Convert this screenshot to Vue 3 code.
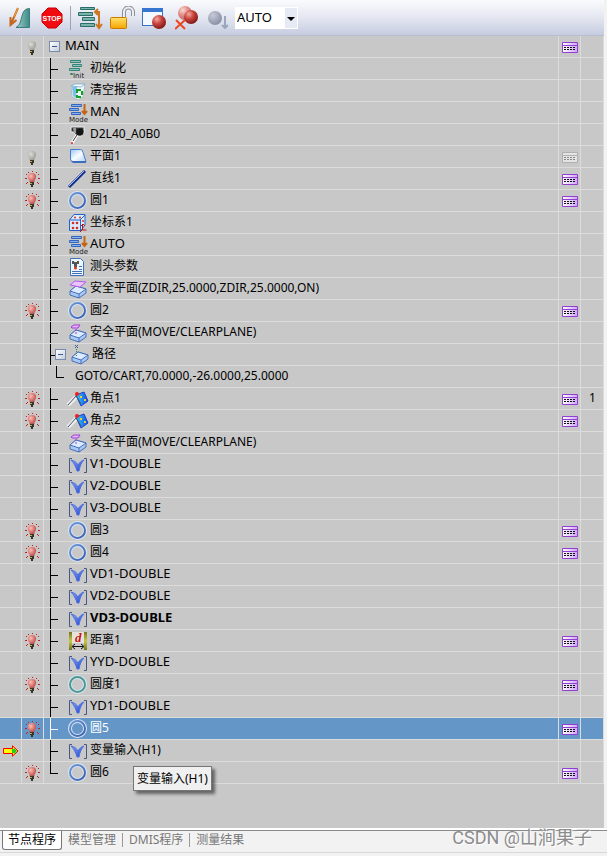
<script setup>
import { ref } from "vue";

const mode = ref("AUTO");
const selected = ref(31);

const rows = [
  { text: "MAIN", kind: "root", wide: true, bulb: "off", report: "on" },
  { text: "初始化", icon: "init" },
  { text: "清空报告", icon: "recycle" },
  { text: "MAN", icon: "mode", wide: true },
  { text: "D2L40_A0B0", icon: "probe" },
  { text: "平面1", icon: "plane", bulb: "off", report: "off" },
  { text: "直线1", icon: "line", bulb: "on", report: "on" },
  { text: "圆1", icon: "circle", bulb: "on", report: "on" },
  { text: "坐标系1", icon: "coord" },
  { text: "AUTO", icon: "mode", wide: true },
  { text: "测头参数", icon: "params" },
  { text: "安全平面(ZDIR,25.0000,ZDIR,25.0000,ON)", icon: "clear" },
  { text: "圆2", icon: "circle", bulb: "on", report: "on" },
  { text: "安全平面(MOVE/CLEARPLANE)", icon: "move" },
  { text: "路径", kind: "branch", icon: "path" },
  { text: "GOTO/CART,70.0000,-26.0000,25.0000", kind: "leaf" },
  { text: "角点1", icon: "corner", bulb: "on", report: "on", count: "1" },
  { text: "角点2", icon: "corner", bulb: "on", report: "on" },
  { text: "安全平面(MOVE/CLEARPLANE)", icon: "move" },
  { text: "V1-DOUBLE", icon: "variable", wide: true },
  { text: "V2-DOUBLE", icon: "variable", wide: true },
  { text: "V3-DOUBLE", icon: "variable", wide: true },
  { text: "圆3", icon: "circle", bulb: "on", report: "on" },
  { text: "圆4", icon: "circle", bulb: "on", report: "on" },
  { text: "VD1-DOUBLE", icon: "variable", wide: true },
  { text: "VD2-DOUBLE", icon: "variable", wide: true },
  { text: "VD3-DOUBLE", icon: "variable", wide: true, bold: true },
  { text: "距离1", icon: "distance", bulb: "on", report: "on" },
  { text: "YYD-DOUBLE", icon: "variable", wide: true },
  { text: "圆度1", icon: "roundness", bulb: "on", report: "on" },
  { text: "YD1-DOUBLE", icon: "variable", wide: true },
  { text: "圆5", icon: "circle", bulb: "on", report: "on" },
  { text: "变量输入(H1)", icon: "variable", current: true, tip: "变量输入(H1)" },
  { text: "圆6", icon: "circle", kind: "last", bulb: "on", report: "on" },
];

const tabs = ["节点程序", "模型管理", "DMIS程序", "测量结果"];
const activeTab = ref("节点程序");
</script>

<template>
  <div class="window">
    <svg class="defs" aria-hidden="true">
      <defs>
        <radialGradient id="ball" cx=".35" cy=".3" r=".75">
          <stop offset="0" stop-color="#f3aaa0" />
          <stop offset=".45" stop-color="#c8453e" />
          <stop offset="1" stop-color="#7c1414" />
        </radialGradient>
        <radialGradient id="paleball" cx=".35" cy=".3" r=".75">
          <stop offset="0" stop-color="#fbd8d2" />
          <stop offset=".5" stop-color="#e08c86" />
          <stop offset="1" stop-color="#c06060" />
        </radialGradient>
        <radialGradient id="greyball" cx=".35" cy=".3" r=".75">
          <stop offset="0" stop-color="#c6cad8" />
          <stop offset="1" stop-color="#868ea4" />
        </radialGradient>
        <radialGradient id="lamp" cx=".35" cy=".35" r=".7">
          <stop offset="0" stop-color="#f8c0b8" />
          <stop offset=".5" stop-color="#e0827c" />
          <stop offset="1" stop-color="#b84e4c" />
        </radialGradient>
        <radialGradient id="lampoff" cx=".35" cy=".35" r=".7">
          <stop offset="0" stop-color="#dcdcd4" />
          <stop offset="1" stop-color="#9c9c96" />
        </radialGradient>
        <linearGradient id="gold" x2="0" y2="1">
          <stop offset="0" stop-color="#ffe36a" />
          <stop offset="1" stop-color="#f5a300" />
        </linearGradient>
        <linearGradient id="teal" x2="1" y2="0">
          <stop offset="0" stop-color="#9fd0c8" />
          <stop offset="1" stop-color="#3c8a88" />
        </linearGradient>
        <linearGradient id="blue" x2="1" y2="1">
          <stop offset="0" stop-color="#9cc4f4" />
          <stop offset=".5" stop-color="#f8fcff" />
          <stop offset="1" stop-color="#b4d0f4" />
        </linearGradient>
        <linearGradient id="ring" x2="1" y2="1">
          <stop offset="0" stop-color="#6f9cdc" />
          <stop offset="1" stop-color="#365cac" />
        </linearGradient>
        <linearGradient id="violet" x2="1" y2="0">
          <stop offset="0" stop-color="#fff" />
          <stop offset="1" stop-color="#cfa4f4" />
        </linearGradient>
        <linearGradient id="vee" x2="1" y2="1">
          <stop offset="0" stop-color="#8aa8fa" />
          <stop offset="1" stop-color="#1c40c8" />
        </linearGradient>
        <linearGradient id="azure" x2="1" y2="0">
          <stop offset="0" stop-color="#30d0ff" />
          <stop offset="1" stop-color="#1848e0" />
        </linearGradient>
        <linearGradient id="olive" x2="0" y2="1">
          <stop offset="0" stop-color="#77741a" />
          <stop offset=".5" stop-color="#c9c747" />
          <stop offset="1" stop-color="#77741a" />
        </linearGradient>
      </defs>
    </svg>

    <header class="toolbar">
      <button class="tool" aria-label="曲线">
        <svg width="25" height="24" viewBox="0 0 25 24">
          <path d="M7 21.500C15 18 10 2.500 20.500 2.500V21.500Z" fill="url(#teal)" stroke="#3b7c7c" />
          <path d="M9 2 2 18M1.500 11v8l6-5" fill="none" stroke="#c4671c" stroke-width="2" />
          <path d="M9 2 5 11" stroke="#f0a63c" />
        </svg>
      </button>
      <button class="tool" aria-label="停止">
        <svg width="22" height="22" viewBox="0 0 22 22">
          <path d="M7 1h8l6 6v8l-6 6H7l-6-6V7Z" fill="#f00c10" stroke="#c80000" />
          <text x="11" y="14" text-anchor="middle" class="stop">STOP</text>
        </svg>
      </button>
      <span class="divider"></span>
      <button class="tool" aria-label="执行顺序">
        <svg width="25" height="24" viewBox="0 0 25 24">
          <g fill="#79b3a9" stroke="#286d68">
            <path d="M2.500 1.500h14v2h-14zM.500 6.500h14v3h-14zM4.500 11.500h12v3h-12zM2.500 17.500h14v3h-14z" />
          </g>
          <path d="M17 6h4v15M18 18l3 4 3-4M20 3l-3 3 3 3" fill="none" stroke="#cc7622" stroke-width="2" />
        </svg>
      </button>
      <button class="tool" aria-label="解锁">
        <svg width="25" height="24" viewBox="0 0 25 24">
          <path d="M14 12V6a4.500 4.500 0 0 1 9 0v4" fill="none" stroke="#8b919b" stroke-width="4" />
          <path d="M14 12V6a4.500 4.500 0 0 1 9 0v4" fill="none" stroke="#eceef2" stroke-width="2" />
          <rect x=".5" y="11.500" width="16" height="11" rx="1" fill="url(#gold)" stroke="#c87c00" />
        </svg>
      </button>
      <button class="tool" aria-label="窗口记录">
        <svg width="26" height="24" viewBox="0 0 26 24">
          <rect x=".5" y="2.500" width="20" height="17" fill="#f4f8ff" stroke="#3a73c4" />
          <path d="M0 2h21v4H0z" fill="#3776d0" />
          <circle cx="17" cy="16" r="7" fill="url(#ball)" />
        </svg>
      </button>
      <button class="tool" aria-label="删除记录">
        <svg width="26" height="24" viewBox="0 0 26 24">
          <circle cx="10" cy="7" r="7" fill="url(#paleball)" />
          <circle cx="16" cy="11" r="7" fill="url(#ball)" />
          <path d="m1 14 9 9M10 14 0 23" stroke="#ee4622" stroke-width="2" />
        </svg>
      </button>
      <button class="tool" aria-label="下一个" disabled>
        <svg width="20" height="22" viewBox="0 0 20 22">
          <circle cx="7" cy="11" r="7" fill="url(#greyball)" />
          <path d="M17 9v12M14 18l3 3 3-3" fill="none" stroke="#9ba5bb" stroke-width="2" />
        </svg>
      </button>
      <label class="mode">
        <select v-model="mode" aria-label="模式">
          <option>AUTO</option>
          <option>MAN</option>
        </select>
        <svg class="caret" width="8" height="4" viewBox="0 0 8 4"><path d="M0 0h8L4 4Z" /></svg>
      </label>
    </header>

    <main class="program">
      <table>
        <colgroup>
          <col class="c-mark" />
          <col class="c-mark" />
          <col />
          <col class="c-mark" />
          <col class="c-count" />
        </colgroup>
        <tbody>
          <tr v-for="(row, i) in rows" :key="i" :class="{ selected: i === selected }" @click="selected = i">
            <td>
              <svg v-if="row.current" class="arrow" width="16" height="12" viewBox="0 0 16 12">
                <path d="M.500 3.500h9V.800L15 6l-5.500 5.200V8.500h-9Z" fill="#ff0" stroke="#f00" />
                <path d="M9 4h2V3l3 3-3 3V8H9Z" fill="#1ed01e" />
              </svg>
            </td>
            <td>
              <svg v-if="row.bulb" class="bulb" width="15" height="16" viewBox="0 0 15 16">
                <g v-if="row.bulb === 'on'">
                  <path
                    d="M3 1h1v1H3zM7 0h1v1H7zM11 1h1v1h-1zM1 3h1v1H1zM13 3h1v1h-1zM0 7h2v1H0zM13 7h2v1h-2zM2 11h1v1H2zM12 11h1v1h-1zM1 12h1v1H1zM13 12h1v1h-1z"
                    fill="#c02020"
                  />
                  <path d="M7 2c5 0 5 5 2.500 7.500V11h-5V9.500C2 7 2 2 7 2Z" fill="url(#lamp)" />
                </g>
                <path v-else d="M7 2c5 0 5 5 2.500 7.500V11h-5V9.500C2 7 2 2 7 2Z" fill="url(#lampoff)" />
                <path d="M5 11h4v3H8v2H6v-2H5z" fill="#3a3522" />
                <path d="M5 12h2v1H5z" fill="#c0a850" />
              </svg>
            </td>
            <td>
              <div class="node" :class="row.kind">
                <span v-if="row.kind !== 'root'" class="branch-line"></span>
                <button v-if="row.kind === 'root' || row.kind === 'branch'" class="toggle" aria-label="折叠"></button>
                <svg v-if="row.icon" class="icon" width="20" height="20" viewBox="0 0 20 20">
                  <g v-if="row.icon === 'init'">
                    <path d="M2.500 1.500h10v2h-10zM4.500 5.500h9v2h-9zM1.500 9.500h10v2h-10zM2.500 14.500h2v1h-2z" fill="#8fc4ba" stroke="#35847c" />
                    <text x="5" y="19" class="tiny">Init</text>
                  </g>
                  <g v-else-if="row.icon === 'recycle'">
                    <path d="M3 5 17 3l-2 13-5 3-6-3Z" fill="#eef8fc" stroke="#a8bcc4" />
                    <path d="m3 5 4-2h10l-4 3Z" fill="#fff" stroke="#8ab4d0" />
                    <path d="M4 6h5l-1 11-3-2Z" fill="#7cc0ea" />
                    <path d="M9 12V9h4M14 10v4M13 16H9v-2" fill="none" stroke="#14a020" stroke-width="2" />
                  </g>
                  <g v-else-if="row.icon === 'mode'">
                    <path d="M3.500 1.500h10v2h-10zM1.500 5.500h9v2h-9zM3.500 9.500h9v2h-9z" fill="#83b0f0" stroke="#3566bb" />
                    <path d="M16.500 1v9M14 8l2.500 3L19 8" fill="none" stroke="#c86410" stroke-width="2" />
                    <text x="1" y="19" class="tiny">Mode</text>
                  </g>
                  <g v-else-if="row.icon === 'probe'">
                    <path d="M3 2h13v5l-3 4H8L6 7H3Z" fill="#333" stroke="#eee" />
                    <path d="M5 3h3v5H6z" fill="#999" />
                    <circle cx="12" cy="7" r="3.500" fill="#151515" />
                    <path d="m9 10-5 8" stroke="#fff" stroke-width="3" />
                    <path d="m9 10-4 6" stroke="#333" />
                    <circle cx="4" cy="18" r="1" fill="#e02020" />
                  </g>
                  <g v-else-if="row.icon === 'plane'">
                    <path d="M2.500 2.500h10q2 0 2.500 3l3 9H5Q2.500 14.500 2.500 12Z" fill="url(#blue)" stroke="#4a7ccc" />
                    <path d="M3 14h15v2H5z" fill="#3e6cbc" />
                  </g>
                  <g v-else-if="row.icon === 'line'">
                    <path d="M1 18 17 2" stroke="#12308e" stroke-width="3" />
                    <path d="M1 17 16 2" stroke="#a8bcf0" />
                  </g>
                  <g v-else-if="row.icon === 'circle' || row.icon === 'roundness'" fill="none">
                    <circle cx="9.500" cy="9.500" r="7.500" stroke="#dde6f2" stroke-width="4" />
                    <circle cx="9.500" cy="9.500" r="7.500" :stroke="row.icon === 'circle' ? 'url(#ring)' : '#4b9994'" stroke-width="2" />
                  </g>
                  <g v-else-if="row.icon === 'coord'">
                    <path d="M1.500 7 6 1.500h11V12l-4 5.500H1.500Z" fill="#dcebff" stroke="#2462c8" />
                    <path d="M2 7h10l5-5M12.500 7v10" fill="none" stroke="#2462c8" />
                    <g fill="#d03020">
                      <circle cx="7" cy="4.500" r="1" /><circle cx="12" cy="4.500" r="1" />
                      <circle cx="5" cy="10" r="1.300" /><circle cx="9" cy="10" r="1.300" />
                      <circle cx="5" cy="15" r="1.300" /><circle cx="9" cy="15" r="1.300" />
                      <circle cx="15" cy="8" r="1" />
                    </g>
                    <path d="M14.500 11v6h4M14 17l-2 2M13 13l2-2 2 2" fill="none" stroke="#c01010" />
                  </g>
                  <g v-else-if="row.icon === 'params'">
                    <path d="M2.500 1.500h10l3 3v14h-13Z" fill="#edf5ff" stroke="#4370b6" />
                    <path d="M4 4h2v1h3V4h2v3H9v3H6V7H4z" fill="#555" />
                    <circle cx="7.500" cy="11" r="1.500" fill="#e03020" />
                    <path d="M11 9.500h3M11 12.500h3M4 14.500h10M4 16.500h10" stroke="#4370b6" />
                  </g>
                  <g v-else-if="row.icon === 'corner'">
                    <path d="m8 6 8-3 4 9-7 5Z" fill="url(#azure)" stroke="#2040c8" />
                    <path d="m0 16 8-8" stroke="#eee" stroke-width="4" />
                    <path d="m0 16 8-9 5 8" fill="none" stroke="#44546c" />
                    <circle cx="9" cy="5" r="2" fill="#f02010" />
                    <path d="M12 7h2v2h-2zM16 10h2v2h-2z" fill="#f0d020" />
                  </g>
                  <g v-else-if="row.icon === 'variable'">
                    <path d="M4 3.500H1.500v14H4M16 3.500h2.500v14H16" fill="none" stroke="#47597e" />
                    <path d="M3 5c4 1 5 2 7 5 2-3 3-4 6-5-3 3-4 6-5 11H9C8 12 6 8 3 5Z" fill="url(#vee)" stroke="#4c70e0" />
                  </g>
                  <g v-else-if="row.icon === 'distance'">
                    <path d="M1 1h3v18H1zM16 1h3v18h-3z" fill="url(#olive)" />
                    <path d="M4 1h12v11H4z" fill="#e4e4dc" />
                    <text x="7" y="11" class="dist">d</text>
                    <path d="M5 15.500h10M7 13l-3 2.500L7 18M13 13l3 2.500-3 2.500" fill="none" stroke="#111" />
                  </g>
                  <g v-else>
                    <path d="m2 12 6-5 10 3v4l-7 5-9-3Z" fill="#a9c9f5" stroke="#496fb8" />
                    <path d="m2 12 6-5 10 3-7 5Z" fill="#dcebff" stroke="#496fb8" />
                    <path d="M11 15v4" stroke="#496fb8" />
                    <path v-if="row.icon === 'clear'" d="m2 6 5-4 11 1-6 5Z" fill="#e8c4fa" stroke="#b45ae8" />
                    <g v-else-if="row.icon === 'move'">
                      <path d="m3 4 3-2h6l-2 3H4Z" fill="#e4b8fa" stroke="#a23ce0" />
                      <path d="M8 6v5" stroke="#a23ce0" stroke-dasharray="2 1" />
                    </g>
                    <g v-else>
                      <path d="m5 0 3 3M8 0 5 3" stroke="#40648c" />
                      <path d="M6.500 4v8" stroke="#2c8c4c" stroke-dasharray="1 1" />
                    </g>
                  </g>
                </svg>
                <span class="label" :class="{ bold: row.bold, wide: row.wide }">{{ row.text }}</span>
                <span v-if="row.tip" class="tip" role="tooltip">{{ row.tip }}</span>
              </div>
            </td>
            <td>
              <svg v-if="row.report" class="report" :class="row.report" width="16" height="11" viewBox="0 0 16 11">
                <path class="frame" d="M.500.500h15v10H.500z" />
                <path class="rule" d="M1 3.500h14" />
                <path class="dots" d="M2 5.500h12M2 7.500h12" />
              </svg>
            </td>
            <td class="count">{{ row.count }}</td>
          </tr>
        </tbody>
      </table>
    </main>

    <footer class="bottom">
      <nav class="tabs">
        <button v-for="t in tabs" :key="t" :class="{ active: t === activeTab }" @click="activeTab = t">{{ t }}</button>
      </nav>
      <span class="watermark">CSDN @山涧果子</span>
    </footer>
  </div>
</template>

<style>
body { margin: 0; background: #f2f2f2; }
</style>

<style scoped>
.window { min-height: 100vh; display: flex; flex-direction: column; font: 12px/16px "Noto Sans", "Noto Sans CJK SC", sans-serif; color: #000; }
.defs { position: absolute; width: 0; height: 0; }
button { border: 0; background: none; padding: 0; font: inherit; color: inherit; }

.toolbar { display: flex; align-items: center; gap: 7px; height: 36px; box-sizing: border-box; margin-right: 3px; padding-left: 9px; border-bottom: 1px solid #b6bfd2; background: linear-gradient(#fafbfd, #e4e7f1 50%, #c6cde0); }
.tool { display: flex; flex: none; }
.divider { width: 1px; height: 24px; background: #9aa2b4; }
.stop { font: bold 7px "Liberation Sans", sans-serif; fill: #fff; }
.mode { position: relative; display: flex; }
.mode select { appearance: none; width: 63px; height: 22px; border: 0; padding: 0 16px 2px 2px; background: linear-gradient(#e6eaf4, #e6eaf4) right 1px center / 12px 20px no-repeat #fff; font: inherit; font-size: 13px; color: #000; }
.caret { position: absolute; right: 3px; top: 10px; pointer-events: none; }

.program { flex: 1; margin-right: 3px; background: #c8c8c8; }
table { width: 100%; table-layout: fixed; border-collapse: separate; border-spacing: 0; }
.c-mark { width: 22px; }
.c-count { width: 23px; }
td { height: 22px; box-sizing: border-box; padding: 0; border-right: 1px solid #dcdcdc; border-bottom: 1px solid #dcdcdc; vertical-align: top; }
.selected td { background: #6496c8; }
.arrow { display: block; margin: 5px 0 0 3px; }
.bulb { display: block; margin: 3px 0 0 3px; }
.report { display: block; margin: 6px 0 0 3px; }
.frame { fill: url(#violet); stroke: #9040d0; }
.rule { stroke: #9040d0; }
.dots { stroke: #111; stroke-dasharray: 2 1; }
.report.off .frame { fill: #e4e4e4; stroke: #b0b0b0; }
.report.off .rule { stroke: #b0b0b0; }
.report.off .dots { stroke: #888; }
.count { padding-left: 8px; line-height: 20px; }

.node { position: relative; display: flex; height: 21px; padding-left: 6px; }
.branch-line { position: relative; flex: none; width: 18px; border-left: 1px solid #000; box-sizing: border-box; }
.branch-line::after { content: ""; position: absolute; left: 0; top: 11px; width: 7px; height: 1px; background: #000; }
.selected .branch-line { border-color: #fff; }
.selected .branch-line::after { background: #fff; }
.icon { flex: none; margin-top: 1px; overflow: visible; }
.label { margin-left: 2px; line-height: 19px; white-space: pre; }
.selected .label { color: #fff; }
.wide { font-size: 13px; }
.bold { font-weight: bold; }
.toggle { flex: none; width: 11px; height: 11px; box-sizing: border-box; margin-top: 5px; border: 1px solid #7a8cab; background: linear-gradient(#3c5a96, #3c5a96) center / 5px 1px no-repeat, linear-gradient(135deg, #fff, #c4cede); }
.root { padding-left: 5px; }
.root .label { margin-left: 5px; }
.branch .branch-line { width: 5px; }
.branch .branch-line::after { width: 4px; }
.branch .icon { margin-left: 4px; }
.leaf { padding-left: 12px; }
.leaf .branch-line, .last .branch-line { height: 12px; }
.leaf .label { margin-left: 1px; }
.tiny { font: 7px "DejaVu Sans", sans-serif; fill: #222; }
.dist { font: italic bold 13px "Liberation Serif", serif; fill: #d01010; }
.tip { position: absolute; z-index: 1; left: 89px; top: 26px; height: 25px; box-sizing: border-box; padding: 4px 3px; border: 1px solid #767676; background: #f0f0f0; box-shadow: 3px 3px 3px rgba(0, 0, 0, .5); white-space: nowrap; }

.bottom { position: relative; height: 28px; box-sizing: border-box; border-top: 2px solid #fff; }
.tabs { display: flex; align-items: flex-start; height: 21px; padding-left: 2px; border-top: 1px solid #8c8c8c; border-bottom: 1px solid #d8d8d8; }
.tabs button { height: 14px; margin-top: 2px; padding: 0 6px; border-right: 1px solid #999; color: #777; line-height: 14px; white-space: nowrap; }
.tabs button:last-child { border-right: 0; }
.tabs .active { height: 19px; margin-top: 0; padding: 0 5px; border: 1px solid #777; border-top: 0; border-radius: 0 0 3px 3px; background: #fff; color: #000; line-height: 18px; }
.watermark { position: absolute; right: 15px; top: -4px; font: 18px/24px Roboto, "Noto Sans CJK SC", sans-serif; color: #8c8c8c; text-shadow: 1px 1px 0 #fff; }
</style>
